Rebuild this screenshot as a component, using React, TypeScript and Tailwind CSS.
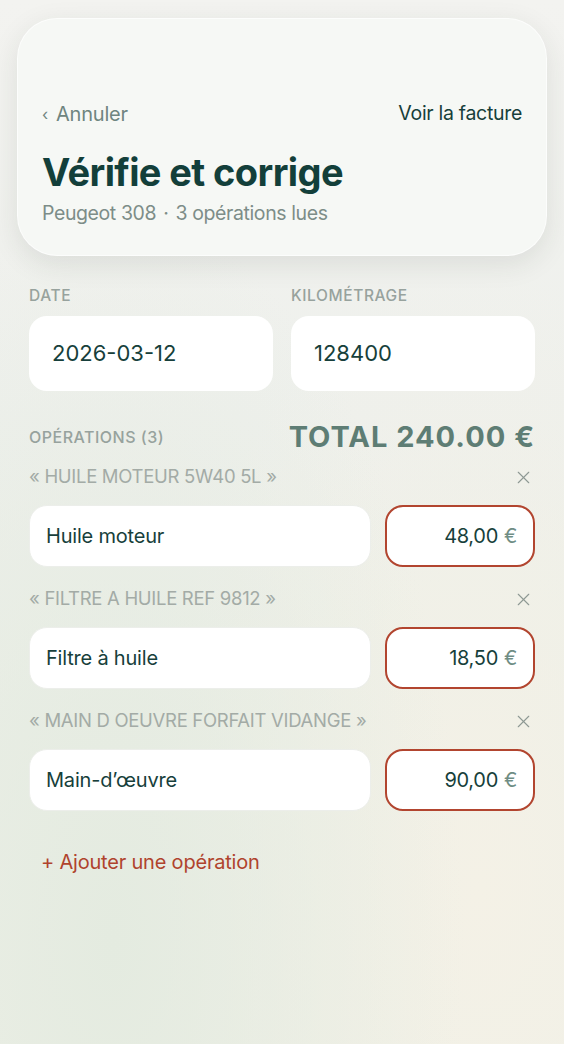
import { X } from 'lucide-react';

type Operation = {
    raw: string;
    name: string;
    price: string;
};

const operations: Operation[] = [
    { raw: 'HUILE MOTEUR 5W40 5L', name: 'Huile moteur', price: '48,00' },
    { raw: 'FILTRE A HUILE REF 9812', name: 'Filtre à huile', price: '18,50' },
    { raw: 'MAIN D OEUVRE FORFAIT VIDANGE', name: 'Main-d’œuvre', price: '90,00' },
];

function OperationRow({ op }: { op: Operation }) {
    return (
        <div className="flex flex-col">
            <div className="flex h-[22px] items-center justify-between">
                <span className="text-[18.5px] uppercase text-[#a3aba6] tracking-[-0.3px]">
                    « {op.raw} »
                </span>
                <X className="mr-[1px] size-[21px] text-[#8e9994]" strokeWidth={1.3} />
            </div>
            <div className="mt-[17px] flex gap-[14px]">
                <div className="flex h-[62px] flex-1 items-center rounded-[18px] border border-[#eceeea] bg-white px-[16px] text-[20px] tracking-[-0.2px] text-[#173f3b]">
                    {op.name}
                </div>
                <div className="flex h-[62px] w-[150px] items-center justify-end rounded-[18px] border-2 border-[#b2452f] bg-white px-[16px] text-[20px] tracking-[-0.3px] text-[#173f3b]">
                    {op.price}
                    <span className="ml-[6px] text-[#6f8d84]">€</span>
                </div>
            </div>
        </div>
    );
}

export default function App() {
    return (
        <div
            className="min-h-[1044px] w-full bg-[radial-gradient(ellipse_at_20%_90%,#e4ebe0_0%,transparent_55%),radial-gradient(ellipse_at_85%_85%,#f4f1e6_0%,transparent_50%),linear-gradient(180deg,#f3f3f0_0%,#eef0ec_40%,#ecefe8_70%,#eff0e8_100%)] pt-[18px] pb-10"
            style={{ fontFamily: 'Inter, "Noto Sans", sans-serif' }}
        >
            <header className="mx-[17px] rounded-[40px] border border-white/70 bg-[#f6f8f5] px-6 pt-[82px] pb-[30px] shadow-[0_8px_28px_rgba(40,50,40,0.10)]">
                <div className="flex h-[26px] items-center justify-between">
                    <span className="flex items-center gap-[8px] text-[20px] tracking-[-0.2px] text-[#6f8580]">
                        <span className="text-[16px]">‹</span>
                        Annuler
                    </span>
                    <span className="text-[19.5px] tracking-[-0.3px] text-[#173f3b]">Voir la facture</span>
                </div>
                <h1 className="mt-[24px] text-[38px] leading-[42px] font-bold tracking-[-0.6px] text-[#133f3a]">
                    Vérifie et corrige
                </h1>
                <p className="mt-[8px] text-[19.5px] leading-[24px] tracking-[-0.4px] text-[#7d8d88]">
                    Peugeot 308 <span className="mx-[2px]">·</span> 3 opérations lues
                </p>
            </header>

            <main className="px-[29px]">
                <div className="mt-[30px] grid grid-cols-2 gap-[18px]">
                    <div className="flex flex-col">
                        <label className="h-[20px] text-[15.5px] leading-[20px] font-medium tracking-[0.6px] text-[#97a29d]">
                            DATE
                        </label>
                        <div className="mt-[10px] flex h-[75px] items-center rounded-[18px] bg-white px-[23px] text-[22px] text-[#173f3b]">
                            2026-03-12
                        </div>
                    </div>
                    <div className="flex flex-col">
                        <label className="h-[20px] text-[15.5px] leading-[20px] font-medium tracking-[0.6px] text-[#97a29d]">
                            KILOMÉTRAGE
                        </label>
                        <div className="mt-[10px] flex h-[75px] items-center rounded-[18px] bg-white px-[23px] text-[22px] text-[#173f3b]">
                            128400
                        </div>
                    </div>
                </div>

                <div className="mt-[28px] flex h-[36px] items-center justify-between">
                    <span className="text-[16px] font-medium tracking-[0.5px] text-[#97a29d]">
                        OPÉRATIONS (3)
                    </span>
                    <span className="text-[29px] font-bold tracking-[1px] text-[#5e7d74]">
                        TOTAL 240.00 €
                    </span>
                </div>

                <div className="mt-[11px] flex flex-col gap-[21px]">
                    {operations.map((op) => (
                        <OperationRow key={op.raw} op={op} />
                    ))}
                </div>

                <button className="mt-[36px] ml-[12px] h-[26px] text-[20px] tracking-[-0.2px] text-[#b0432d]">
                    + Ajouter une opération
                </button>
            </main>
        </div>
    );
}
